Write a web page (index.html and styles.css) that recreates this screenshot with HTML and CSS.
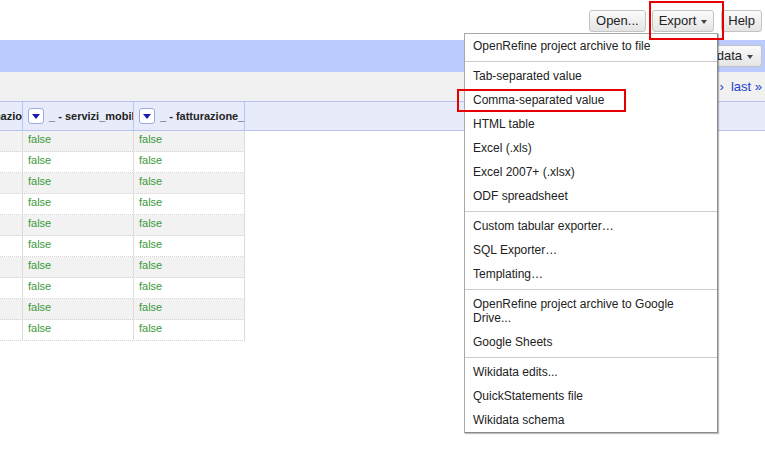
FILE: index.html
```html
<!DOCTYPE html>
<html>
<head>
<meta charset="utf-8">
<link rel="stylesheet" href="styles.css">
</head>
<body>
<div class="topbar">
  <span class="btn">Open...</span>
  <span class="btn">Export<span class="caret"></span></span>
  <span class="btn">Help</span>
</div>
<div class="bluebar">
  <span class="btn">Wikidata<span class="caret"></span></span>
</div>
<div class="graybar">
  <a class="pager">›</a><a class="pager last">last »</a>
</div>
<div class="thead">
  <div class="hcell c1"><span class="htext">_ - denominazio</span></div>
  <div class="hcell c2"><span class="dd"><span class="tri"></span></span><span class="htext">_ - servizi_mobili</span></div>
  <div class="hcell c3"><span class="dd"><span class="tri"></span></span><span class="htext">_ - fatturazione_elettronica</span></div>
</div>
<div class="rows">
  <div class="row odd"><div class="cell c1"></div><div class="cell c2">false</div><div class="cell c3">false</div></div>
  <div class="row"><div class="cell c1"></div><div class="cell c2">false</div><div class="cell c3">false</div></div>
  <div class="row odd"><div class="cell c1"></div><div class="cell c2">false</div><div class="cell c3">false</div></div>
  <div class="row"><div class="cell c1"></div><div class="cell c2">false</div><div class="cell c3">false</div></div>
  <div class="row odd"><div class="cell c1"></div><div class="cell c2">false</div><div class="cell c3">false</div></div>
  <div class="row"><div class="cell c1"></div><div class="cell c2">false</div><div class="cell c3">false</div></div>
  <div class="row odd"><div class="cell c1"></div><div class="cell c2">false</div><div class="cell c3">false</div></div>
  <div class="row"><div class="cell c1"></div><div class="cell c2">false</div><div class="cell c3">false</div></div>
  <div class="row odd"><div class="cell c1"></div><div class="cell c2">false</div><div class="cell c3">false</div></div>
  <div class="row"><div class="cell c1"></div><div class="cell c2">false</div><div class="cell c3">false</div></div>
</div>

<div class="menu">
  <div class="item">OpenRefine project archive to file</div>
  <div class="sep"></div>
  <div class="item">Tab-separated value</div>
  <div class="item">Comma-separated value</div>
  <div class="item">HTML table</div>
  <div class="item">Excel (.xls)</div>
  <div class="item">Excel 2007+ (.xlsx)</div>
  <div class="item">ODF spreadsheet</div>
  <div class="sep"></div>
  <div class="item">Custom tabular exporter…</div>
  <div class="item">SQL Exporter…</div>
  <div class="item">Templating…</div>
  <div class="sep"></div>
  <div class="item">OpenRefine project archive to Google Drive...</div>
  <div class="item">Google Sheets</div>
  <div class="sep"></div>
  <div class="item">Wikidata edits...</div>
  <div class="item">QuickStatements file</div>
  <div class="item">Wikidata schema</div>
</div>

<div class="mark mark-export"></div>
<div class="mark mark-csv"></div>
</body>
</html>
```

FILE: styles.css
```css
* { box-sizing: border-box; }
html, body { margin: 0; padding: 0; }
body {
  font-family: "Liberation Sans", Arial, sans-serif;
  background: #fff;
  color: #222;
  width: 765px;
  height: 461px;
  overflow: hidden;
  position: relative;
}

.topbar {
  height: 40px;
  display: flex;
  justify-content: flex-end;
  align-items: flex-start;
  padding: 10px 3px 0 0;
}
.btn {
  display: inline-flex;
  align-items: center;
  height: 22px;
  padding: 0 6px;
  margin-left: 6px;
  border: 1px solid #c4c4c4;
  border-radius: 3px;
  background: linear-gradient(#fbfbfb, #e4e4e4);
  font-size: 13px;
  line-height: 20px;
  color: #222;
  white-space: nowrap;
}
.topbar .btn + .btn + .btn { margin-left: 7px; }
.caret {
  display: inline-block;
  width: 0;
  height: 0;
  margin-left: 5px;
  margin-top: 1px;
  border-left: 3.5px solid transparent;
  border-right: 3.5px solid transparent;
  border-top: 4px solid #444;
}

.bluebar {
  height: 32px;
  background: #bbcbfd;
  display: flex;
  justify-content: flex-end;
  align-items: center;
  padding-right: 3px;
}
.bluebar .btn { padding: 0 8px 0 6px; }

.graybar {
  height: 29px;
  background: #f1f1f1;
  display: flex;
  justify-content: flex-end;
  align-items: center;
  padding: 0 3px 1px 0;
}
.pager {
  color: #2140cc;
  font-size: 13px;
}
.pager.last { margin-left: 7px; }

.thead {
  height: 30px;
  display: flex;
  background: #e8ecfa;
  border-top: 1px solid #b7c4f3;
  border-bottom: 1px solid #b7c4f3;
}
.hcell {
  display: flex;
  align-items: center;
  overflow: hidden;
  white-space: nowrap;
  border-right: 1px solid #b7c4f3;
  font-size: 11px;
  font-weight: bold;
  color: #222;
}
.hcell.c1 { width: 23px; justify-content: flex-end; }
.hcell.c2, .hcell.c3 { width: 111px; padding-left: 5px; }
.htext { flex: none; }
.dd {
  flex: none;
  width: 16px;
  height: 16px;
  margin-right: 5px;
  background: #fff;
  border: 1px solid #9ea9e2;
  border-radius: 3px;
  display: flex;
  align-items: center;
  justify-content: center;
}
.tri {
  width: 0;
  height: 0;
  margin-top: 1px;
  border-left: 4px solid transparent;
  border-right: 4px solid transparent;
  border-top: 5px solid #1a1ab4;
}

.rows { width: 245px; }
.row {
  display: flex;
  height: 21px;
  border-bottom: 1px dotted #d4d4d4;
  background: #fff;
}
.row.odd { background: #f2f2f2; }
.cell {
  border-right: 1px solid #dcdcdc;
  font-size: 11px;
  line-height: 14px;
  padding: 1px 5px 0 5px;
  color: #3a9a3a;
}
.cell.c1 { width: 23px; }
.cell.c2, .cell.c3 { width: 111px; }

.menu {
  position: absolute;
  left: 464px;
  top: 33px;
  width: 254px;
  background: #fff;
  border: 1px solid #a8a8a8;
  border-right-color: #8a8a8a;
  border-bottom-color: #8a8a8a;
  box-shadow: 1px 1px 1px rgba(0,0,0,0.25);
  z-index: 5;
}
.item {
  padding: 5px 25px 5px 8px;
  font-size: 12px;
  line-height: 14px;
  color: #222;
}
.sep {
  margin: 3px 0 2px;
  border-top: 1px solid #cccccc;
}

.mark {
  position: absolute;
  border: 2px solid #e60000;
  z-index: 10;
}
.mark-export { left: 649px; top: 1px; width: 75px; height: 39px; }
.mark-csv { left: 457px; top: 89px; width: 169px; height: 23px; }
```
